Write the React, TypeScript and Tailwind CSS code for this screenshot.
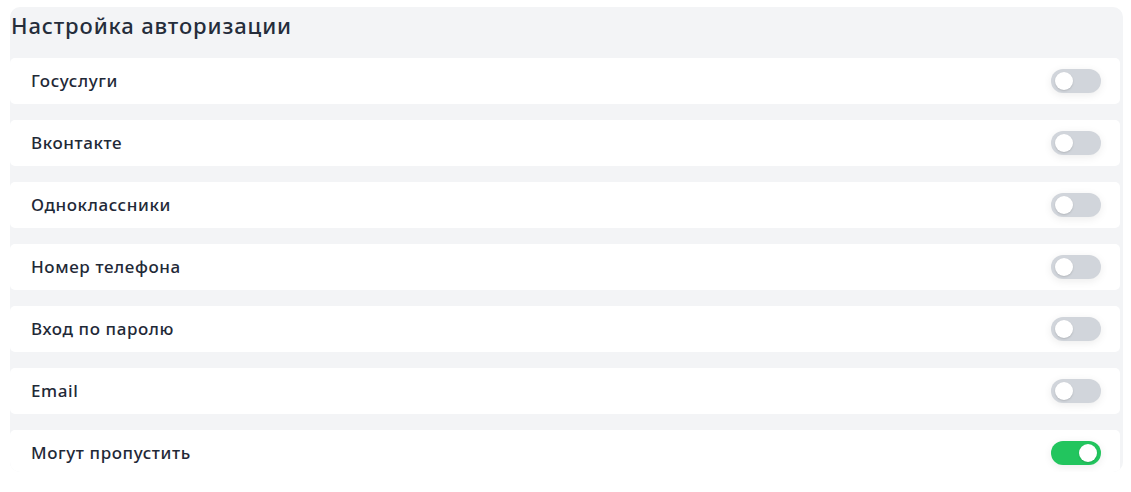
import { useState } from "react";

type Item = { id: string; label: string; enabled: boolean };

const initialItems: Item[] = [
  { id: "gosuslugi", label: "Госуслуги", enabled: false },
  { id: "vk", label: "Вконтакте", enabled: false },
  { id: "ok", label: "Одноклассники", enabled: false },
  { id: "phone", label: "Номер телефона", enabled: false },
  { id: "password", label: "Вход по паролю", enabled: false },
  { id: "email", label: "Email", enabled: false },
  { id: "skip", label: "Могут пропустить", enabled: true },
];

function Toggle({ checked, onChange }: { checked: boolean; onChange: () => void }) {
  return (
    <button
      type="button"
      role="switch"
      aria-checked={checked}
      onClick={onChange}
      className={
        checked
          ? "flex h-6 w-[50px] items-center justify-end rounded-full bg-[#22c55e] px-[4px] shadow-[0_2px_8px_rgba(0,0,0,0.08)]"
          : "flex h-6 w-[50px] items-center justify-start rounded-full bg-[#d1d5db] px-[4px] shadow-[0_2px_8px_rgba(0,0,0,0.08)]"
      }
    >
      <span className="block h-[18px] w-[18px] rounded-full bg-white shadow-[0_1px_2px_rgba(0,0,0,0.15)]" />
    </button>
  );
}

export default function App() {
  const [items, setItems] = useState(initialItems);

  const toggle = (id: string) =>
    setItems((prev) => prev.map((item) => (item.id === id ? { ...item, enabled: !item.enabled } : item)));

  return (
    <div className="min-h-[492px] bg-white pl-[10px] pr-[8px] pt-[7px] font-['Noto_Sans',sans-serif] text-[#1f2937]">
      <section className="h-[465px] overflow-hidden rounded-[10px] bg-[#f3f4f6] pr-[3px]">
        <h2 className="px-px pt-[4px] text-[22px] font-medium leading-7 tracking-[0.04em] text-[#252d3b]">
          Настройка авторизации
        </h2>
        <div className="mt-[19px] flex flex-col gap-4">
          {items.map((item) => (
            <div
              key={item.id}
              className="flex h-[46px] items-center justify-between rounded-[5px] bg-white pl-[21px] pr-[19px]"
            >
              <span className="text-[17px] font-medium tracking-[0.035em] text-[#1f2937]">{item.label}</span>
              <Toggle checked={item.enabled} onChange={() => toggle(item.id)} />
            </div>
          ))}
        </div>
      </section>
    </div>
  );
}
